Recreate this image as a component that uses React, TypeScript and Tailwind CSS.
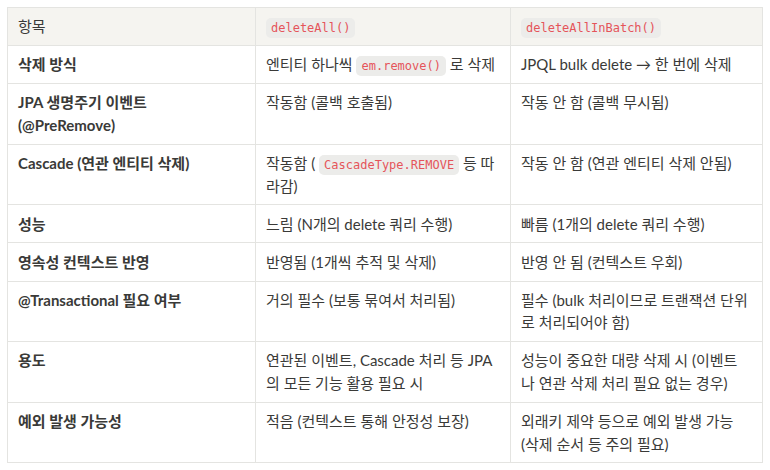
const Code = ({ children }: { children: string }) => (
  <code className="rounded-[5px] bg-[#ececea] px-[5px] py-[3px] font-['DejaVu_Sans_Mono','Liberation_Mono',monospace] text-[12px] leading-none text-[#e5545a]">
    {children}
  </code>
);

type Row = { label: React.ReactNode; a: React.ReactNode; b: React.ReactNode };

const rows: Row[] = [
  {
    label: "삭제 방식",
    a: (
      <>
        엔티티 하나씩 <Code>em.remove()</Code> 로 삭제
      </>
    ),
    b: "JPQL bulk delete → 한 번에 삭제",
  },
  { label: "JPA 생명주기 이벤트 (@PreRemove)", a: "작동함 (콜백 호출됨)", b: "작동 안 함 (콜백 무시됨)" },
  {
    label: "Cascade (연관 엔티티 삭제)",
    a: (
      <>
        작동함 ( <Code>CascadeType.REMOVE</Code> 등 따라감)
      </>
    ),
    b: "작동 안 함 (연관 엔티티 삭제 안됨)",
  },
  { label: "성능", a: "느림 (N개의 delete 쿼리 수행)", b: "빠름 (1개의 delete 쿼리 수행)" },
  { label: "영속성 컨텍스트 반영", a: "반영됨 (1개씩 추적 및 삭제)", b: "반영 안 됨 (컨텍스트 우회)" },
  {
    label: "@Transactional 필요 여부",
    a: "거의 필수 (보통 묶여서 처리됨)",
    b: "필수 (bulk 처리이므로 트랜잭션 단위로 처리되어야 함)",
  },
  {
    label: "용도",
    a: "연관된 이벤트, Cascade 처리 등 JPA의 모든 기능 활용 필요 시",
    b: (
      <>
        성능이 중요한 대량 삭제 시 (이벤트
        <br />나 연관 삭제 처리 필요 없는 경우)
      </>
    ),
  },
  {
    label: "예외 발생 가능성",
    a: "적음 (컨텍스트 통해 안정성 보장)",
    b: "외래키 제약 등으로 예외 발생 가능 (삭제 순서 등 주의 필요)",
  },
];

export default function App() {
  const cell = "border border-[#e4e4e1] px-[10px] py-[7.3px] align-top text-left";
  return (
    <div className="w-[770px] h-[470px] bg-white pl-[7px] pt-[7px] font-['Lato','Noto_Sans_CJK_KR',sans-serif] text-[15px] leading-[22.5px] text-[#3a3a38]">
      <table className="w-[755px] table-fixed border-collapse">
        <colgroup>
          <col className="w-[248px]" />
          <col className="w-[255px]" />
          <col className="w-[252px]" />
        </colgroup>
        <thead>
          <tr className="bg-[#f5f4f0]">
            <th className={`${cell} font-normal`}>항목</th>
            <th className={`${cell} font-normal`}>
              <Code>deleteAll()</Code>
            </th>
            <th className={`${cell} font-normal`}>
              <Code>deleteAllInBatch()</Code>
            </th>
          </tr>
        </thead>
        <tbody>
          {rows.map((r, i) => (
            <tr key={i}>
              <td className={`${cell} font-bold`}>{r.label}</td>
              <td className={cell}>{r.a}</td>
              <td className={cell}>{r.b}</td>
            </tr>
          ))}
        </tbody>
      </table>
    </div>
  );
}
